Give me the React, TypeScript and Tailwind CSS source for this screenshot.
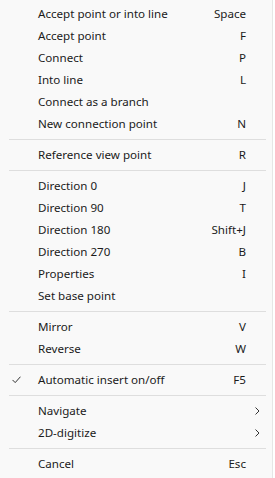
import { Fragment } from "react";

type Item = { label: string; key?: string; checked?: boolean; sub?: boolean };

const GROUPS: Item[][] = [
  [
    { label: "Accept point or into line", key: "Space" },
    { label: "Accept point", key: "F" },
    { label: "Connect", key: "P" },
    { label: "Into line", key: "L" },
    { label: "Connect as a branch" },
    { label: "New connection point", key: "N" },
  ],
  [{ label: "Reference view point", key: "R" }],
  [
    { label: "Direction 0", key: "J" },
    { label: "Direction 90", key: "T" },
    { label: "Direction 180", key: "Shift+J" },
    { label: "Direction 270", key: "B" },
    { label: "Properties", key: "I" },
    { label: "Set base point" },
  ],
  [
    { label: "Mirror", key: "V" },
    { label: "Reverse", key: "W" },
  ],
  [{ label: "Automatic insert on/off", key: "F5", checked: true }],
  [
    { label: "Navigate", sub: true },
    { label: "2D-digitize", sub: true },
  ],
  [{ label: "Cancel", key: "Esc" }],
];

function Check() {
  return (
    <svg width="9" height="8" viewBox="0 0 9 8" fill="none">
      <path d="M0.8 4.2 L3.2 6.6 L8.2 1" stroke="#333" strokeWidth="1" strokeLinecap="round" strokeLinejoin="round" />
    </svg>
  );
}

function Chevron() {
  return (
    <svg width="5" height="8" viewBox="0 0 5 8" fill="none">
      <path d="M0.8 0.8 L4 4 L0.8 7.2" stroke="#333" strokeWidth="1" strokeLinecap="round" strokeLinejoin="round" />
    </svg>
  );
}

function Row({ item }: { item: Item }) {
  return (
    <div className="flex h-[22px] items-center text-[11.6px] text-[#1b1b1b]">
      <div className="flex w-[38px] shrink-0 items-center pl-[12px]">{item.checked && <Check />}</div>
      <span className="flex-1 whitespace-nowrap">{item.label}</span>
      {item.key && <span className="whitespace-nowrap">{item.key}</span>}
      <div className="flex w-[26px] shrink-0 items-center pl-[9px]">{item.sub && <Chevron />}</div>
    </div>
  );
}

export default function App() {
  return (
    <div className="h-[478px] w-[275px] bg-white" style={{ fontFamily: '"Segoe UI", "Noto Sans", sans-serif' }}>
      <div className="h-full w-[273px] border-r border-[#e6e6e6] bg-[#f9f9f9] pt-[3px]">
        {GROUPS.map((group, gi) => (
          <Fragment key={gi}>
            {gi > 0 && (
              <div className="flex h-[9px] items-center pl-[9px] pr-[6px]">
                <div className="h-px w-full bg-[#dedede]" />
              </div>
            )}
            {group.map(item => (
              <Row key={item.label} item={item} />
            ))}
          </Fragment>
        ))}
      </div>
    </div>
  );
}
